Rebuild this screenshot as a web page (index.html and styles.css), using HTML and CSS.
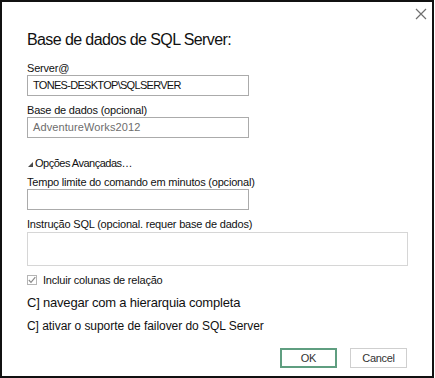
FILE: index.html
```html
<!DOCTYPE html>
<html lang="pt">
<head>
    <meta charset="UTF-8">
    <title>Base de dados de SQL Server</title>
    <link rel="stylesheet" href="styles.css">
</head>
<body>
    <div class="dialog">
        <div class="close-row">
            <button class="close-btn" aria-label="Fechar">
                <svg width="12" height="12" viewBox="0 0 12 12">
                    <path d="M1 1 L11 11 M11 1 L1 11" stroke="#6f6f6f" stroke-width="1.2" fill="none"/>
                </svg>
            </button>
        </div>

        <h1 class="title">Base de dados de SQL Server:</h1>

        <label class="field-label">Server@</label>
        <div class="input caps">TONES-DESKTOP\SQLSERVER</div>

        <label class="field-label">Base de dados (opcional)</label>
        <div class="input placeholder">AdventureWorks2012</div>

        <div class="advanced">
            <svg class="arrow" width="5" height="5" viewBox="0 0 5 5">
                <path d="M5 0 L5 5 L0 5 Z" fill="#4a4a4a"/>
            </svg>
            Opções Avançadas…
        </div>

        <label class="field-label">Tempo limite do comando em minutos (opcional)</label>
        <div class="input"></div>

        <label class="field-label">Instrução SQL (opcional. requer base de dados)</label>
        <div class="textarea"></div>

        <div class="check-row">
            <span class="checkbox">
                <svg width="8" height="8" viewBox="0 0 8 8">
                    <path d="M0.8 4 L3 6.3 L7.3 1.2" stroke="#8a8a8a" stroke-width="1.2" fill="none"/>
                </svg>
            </span>
            Incluir colunas de relação
        </div>

        <div class="option big">C] navegar com a hierarquia completa</div>
        <div class="option">C] ativar o suporte de failover do SQL Server</div>

        <div class="actions">
            <button class="btn primary">OK</button>
            <button class="btn">Cancel</button>
        </div>
    </div>
</body>
</html>
```

FILE: styles.css
```css
body {
    margin: 0;
    background: #fff;
    font-family: "Liberation Sans", Arial, sans-serif;
    color: #111;
}

.dialog {
    box-sizing: border-box;
    width: 434px;
    height: 378px;
    border: 2px solid #111;
    padding: 0 25px;
    display: flex;
    flex-direction: column;
}

.dialog > * {
    flex-shrink: 0;
}

.close-row {
    display: flex;
    justify-content: flex-end;
    margin-right: -20px;
    padding-top: 6px;
    height: 12px;
}

.close-btn {
    background: none;
    border: none;
    padding: 0;
    width: 12px;
    height: 12px;
    display: flex;
}

.title {
    font-size: 16px;
    line-height: 20px;
    font-weight: normal;
    margin: 10px 0 11px 0;
    letter-spacing: -0.6px;
}

.field-label {
    font-size: 11px;
    line-height: 14px;
    letter-spacing: -0.2px;
}

.input {
    box-sizing: border-box;
    width: 222px;
    height: 21px;
    border: 1px solid #ababab;
    font-size: 11px;
    line-height: 19px;
    padding-left: 5px;
    margin-bottom: 7px;
    letter-spacing: -0.2px;
}

.input.caps {
    letter-spacing: -0.7px;
}

.input.placeholder {
    color: #6d6d6d;
    letter-spacing: 0.1px;
}

.advanced {
    font-size: 11px;
    line-height: 14px;
    margin: 11px 0 5px 0;
    display: flex;
    align-items: center;
    letter-spacing: -0.5px;
}

.arrow {
    margin: 2px 2px 0 1px;
}

.textarea {
    box-sizing: border-box;
    width: 381px;
    height: 34px;
    margin-top: 1px;
    border: 1px solid #d6d6d6;
    margin-bottom: 7px;
}

.check-row {
    display: flex;
    align-items: center;
    font-size: 11px;
    line-height: 14px;
    letter-spacing: -0.2px;
}

.checkbox {
    box-sizing: border-box;
    width: 10px;
    height: 10px;
    border: 1px solid #b5b5b5;
    display: flex;
    align-items: center;
    justify-content: center;
    margin: 0 6px 1px 0;
}

.option {
    font-size: 12px;
    line-height: 14px;
    letter-spacing: -0.05px;
    margin-top: 8px;
}

.option.big {
    font-size: 13px;
    line-height: 16px;
    letter-spacing: -0.2px;
    margin-top: 8px;
}

.actions {
    display: flex;
    justify-content: flex-end;
    gap: 13px;
    margin-top: 15px;
}

.btn {
    box-sizing: border-box;
    width: 57px;
    height: 20px;
    padding: 0;
    background: #fff;
    border: 1px solid #cfcfcf;
    font-family: "Liberation Sans", Arial, sans-serif;
    font-size: 11px;
    color: #333;
    letter-spacing: -0.3px;
}

.btn.primary {
    border: 2px solid #5f9e80;
}
```
